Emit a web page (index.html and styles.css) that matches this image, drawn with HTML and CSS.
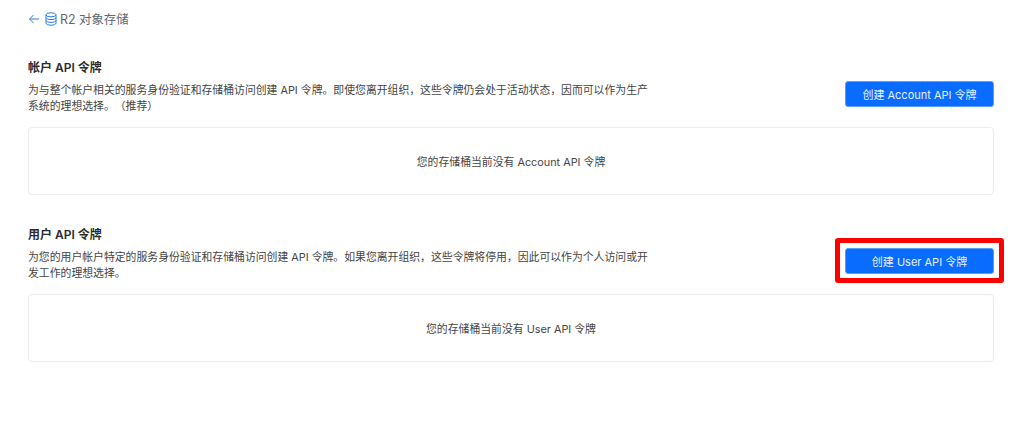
FILE: index.html
```html
<!DOCTYPE html>
<html lang="zh-CN">
<head>
    <meta charset="UTF-8">
    <title>R2 对象存储</title>
    <link rel="stylesheet" href="styles.css">
</head>
<body>
    <div class="breadcrumb">
        <svg class="back-icon" width="12" height="12" viewBox="0 0 12 12" fill="none" stroke="#2f7fd6" stroke-width="1">
            <path d="M11 6H1.5M5.5 2 1.5 6l4 4"/>
        </svg>
        <svg class="db-icon" width="12" height="14" viewBox="0 0 12 14" fill="none" stroke="#2f7fd6" stroke-width="1">
            <ellipse cx="6" cy="2.8" rx="5" ry="2"/>
            <path d="M1 2.8v8.4c0 1.1 2.2 2 5 2s5-.9 5-2V2.8M1 5.6c0 1.1 2.2 2 5 2s5-.9 5-2M1 8.4c0 1.1 2.2 2 5 2s5-.9 5-2"/>
        </svg>
        <span class="breadcrumb-label">R2 对象存储</span>
    </div>

    <section class="token-section">
        <div class="section-head">
            <div class="section-text">
                <h2>帐户 API 令牌</h2>
                <p>为与整个帐户相关的服务身份验证和存储桶访问创建 API 令牌。即使您离开组织，这些令牌仍会处于活动状态，因而可以作为生产系统的理想选择。（推荐）</p>
            </div>
            <button class="create-btn">创建 Account API 令牌</button>
        </div>
        <div class="empty-box">您的存储桶当前没有 Account API 令牌</div>
    </section>

    <section class="token-section">
        <div class="section-head">
            <div class="section-text">
                <h2>用户 API 令牌</h2>
                <p>为您的用户帐户特定的服务身份验证和存储桶访问创建 API 令牌。如果您离开组织，这些令牌将停用，因此可以作为个人访问或开发工作的理想选择。</p>
            </div>
            <div class="btn-wrap">
                <button class="create-btn">创建 User API 令牌</button>
                <div class="highlight"></div>
            </div>
        </div>
        <div class="empty-box">您的存储桶当前没有 User API 令牌</div>
    </section>
</body>
</html>
```

FILE: styles.css
```css
body {
    margin: 0;
    padding: 12px 30px 0 28px;
    height: 442px;
    box-sizing: border-box;
    overflow: hidden;
    background-color: #ffffff;
    color: #3a3a3a;
    font-family: Inter, "Noto Sans CJK SC", sans-serif;
    text-spacing-trim: space-all;
}
.breadcrumb {
    display: flex;
    align-items: center;
    height: 14px;
    margin-bottom: 34px;
}
.back-icon {
    margin-right: 5px;
}
.db-icon {
    margin-right: 3px;
}
.breadcrumb-label {
    font-size: 12.4px;
    color: #5f6670;
}
.token-section {
    margin-bottom: 32px;
}
.section-head {
    display: flex;
    justify-content: space-between;
    align-items: flex-end;
    margin-bottom: 13px;
}
.section-text {
    width: 624px;
}
h2 {
    margin: 0 0 6px;
    font-size: 12px;
    line-height: 16px;
    font-weight: 600;
    color: #2b2b2b;
}
p {
    margin: 0;
    font-size: 10.85px;
    line-height: 16px;
    color: #444;
}
.btn-wrap {
    position: relative;
    display: flex;
}
.create-btn {
    width: 149px;
    height: 26px;
    margin-bottom: 7px;
    padding: 0;
    border: 1px solid #5a9cff;
    border-radius: 3px;
    background-color: #0a6cff;
    color: #e6f0ff;
    font-family: inherit;
    font-size: 11px;
    cursor: pointer;
}
.highlight {
    position: absolute;
    top: -10px;
    left: -10px;
    width: 169px;
    height: 45px;
    box-sizing: border-box;
    border: 5px solid #ff0000;
    border-radius: 3px;
}
.empty-box {
    display: flex;
    align-items: center;
    justify-content: center;
    height: 68px;
    box-sizing: border-box;
    border: 1px solid #ececec;
    border-radius: 4px;
    font-size: 10.85px;
    color: #444;
}
```
